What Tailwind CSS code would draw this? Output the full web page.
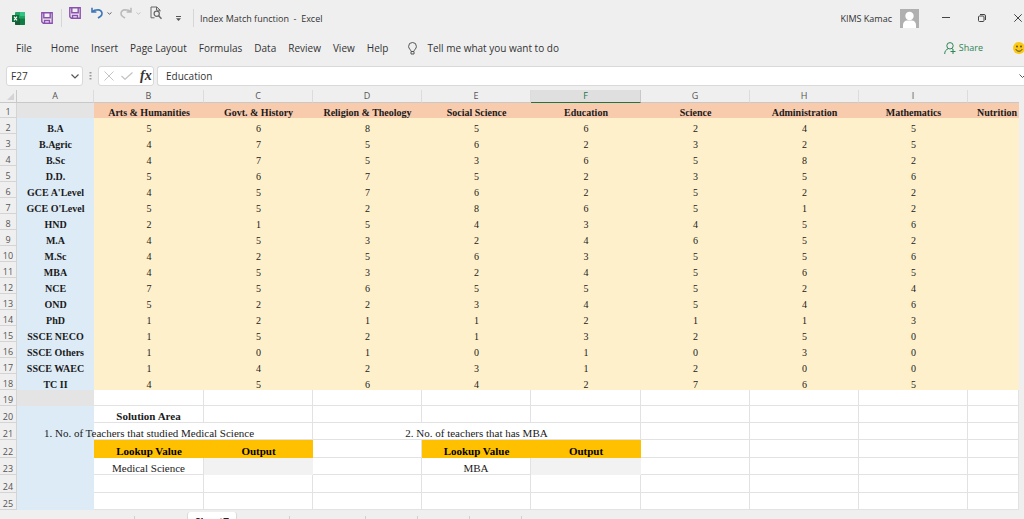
<!DOCTYPE html>
<html lang="en">
<head>
<meta charset="utf-8">
<title>Index Match function - Excel</title>
<script src="https://cdn.jsdelivr.net/npm/@tailwindcss/browser@4"></script>
</head>
<body class="h-screen overflow-hidden flex flex-col bg-[#efefef] text-[#333] text-[10px] leading-4 font-['Open_Sans',sans-serif]">

<header class="flex items-center h-9 shrink-0 pl-3">
  <svg class="w-[13px] h-[13px]" viewBox="0 0 13 13" aria-label="Excel">
    <rect x="3" y="0" width="10" height="13" rx="1" fill="#21a366"/>
    <path d="M3 6.500h5V13H4a1 1 0 0 1-1-1z" fill="#185c37"/><path d="M8 0h4a1 1 0 0 1 1 1v3H8z" fill="#33c481"/><path d="M8 6.500h5V12a1 1 0 0 1-1 1H8z" fill="#107c41"/>
    <rect x="0" y="3" width="7" height="7" rx=".6" fill="#0f6b38"/>
    <path d="M2 4.700l3 3.600M5 4.700L2 8.300" stroke="#fff" stroke-width="1.100"/>
  </svg>
  <button aria-label="Save" class="ml-4"><svg class="w-3 h-3" viewBox="0 0 12 12" fill="none" stroke="#8a4fb0" stroke-width="1.400"><path d="M.8.8h10.400v10.400H2.300L.8 9.700zM2.800.8v5h6.400v-5M3.500 11V8.500h5V11"/></svg></button>
  <span class="w-px h-[18px] bg-[#d6d6d6] ml-2"></span>
  <div class="flex items-center self-start h-[26px] ml-[7px]">
    <button aria-label="Save workbook"><svg class="w-3 h-3" viewBox="0 0 12 12" fill="none" stroke="#8a4fb0" stroke-width="1.400"><path d="M.8.8h10.400v10.400H2.300L.8 9.700zM2.800.8v5h6.400v-5M3.500 11V8.500h5V11"/></svg></button>
    <button aria-label="Undo" class="ml-[10px]"><svg class="w-3 h-3" viewBox="0 0 12 12" fill="none" stroke="#3c76b8" stroke-width="1.600"><path d="M1 .8v4.200h4.400M1.200 4.800C3 2.700 5 2.700 7 2.700c4.500.3 5 5 2.300 6.800L7 11"/></svg></button>
    <button aria-label="Undo options" class="ml-1"><svg class="w-[5px] h-[3px]" viewBox="0 0 5 3" fill="none" stroke="#666"><path d="M.5.500l2 1.700 2-1.700"/></svg></button>
    <button aria-label="Redo" class="ml-2"><svg class="w-3 h-3" viewBox="0 0 12 12" fill="none" stroke="#b9b9b9" stroke-width="1.500"><path d="M11 .8v4.200H6.600M10.800 4.800C9 2.700 7 2.700 5 2.700c-4.500.3-5 5-2.300 6.800L5 11"/></svg></button>
    <button aria-label="Redo options" class="ml-1"><svg class="w-[5px] h-[3px]" viewBox="0 0 5 3" fill="none" stroke="#c4c4c4"><path d="M.5.500l2 1.700 2-1.700"/></svg></button>
    <button aria-label="Print preview" class="ml-[9px]"><svg class="w-3 h-[14px]" viewBox="0 0 12 14" fill="none" stroke="#666"><path d="M4.500 11.800H1V1h5.800L10 4v1.500M6.500 1v3.200H10"/><circle cx="6.700" cy="7.800" r="2.600" stroke-width="1.200"/><path d="M8.600 9.700l2.900 3" stroke-width="1.400"/></svg></button>
  </div>
  <button aria-label="Customize quick access" class="ml-[14px]"><svg class="w-[5px] h-[5px]" viewBox="0 0 5 5"><path d="M0 .5h5" stroke="#555"/><path d="M0 2.200h5L2.500 5z" fill="#555"/></svg></button>
  <span class="w-px h-[18px] bg-[#d6d6d6] ml-3"></span>
  <h1 class="ml-[6px] pt-px whitespace-pre text-[9px]">Index Match function  -  Excel</h1>
  <span class="ml-auto pt-px text-[9px]">KIMS Kamac</span>
  <svg class="w-[19px] h-[19px] ml-2" viewBox="0 0 19 19"><path fill="#b0b0b0" d="M0 0h19v19H0z"/><circle cx="9.500" cy="7" r="4.200" fill="#fff"/><path d="M3 19v-3c0-3 2-4.500 4-4.500h5c2 0 4 1.500 4 4.500v3z" fill="#fff"/></svg>
  <button aria-label="Minimize" class="ml-[23px]"><svg class="w-2 h-2" viewBox="0 0 8 8" stroke="#444"><path d="M0 3.500h8"/></svg></button>
  <button aria-label="Restore" class="ml-7"><svg class="w-2 h-2" viewBox="0 0 8 8" fill="none" stroke="#444"><rect x=".5" y="2" width="5.500" height="5.500" rx="1"/><path d="M2 .5h4a1.500 1.500 0 0 1 1.500 1.500v4"/></svg></button>
  <button aria-label="Close" class="ml-7 mr-[2px]"><svg class="w-2 h-2" viewBox="0 0 8 8" stroke="#444"><path d="M.3.300l7.400 7.400M7.700.3L.3 7.700"/></svg></button>
</header>

<nav class="flex items-center h-6 shrink-0 pl-4">
  <button class="mr-[19px]">File</button>
  <div class="flex gap-3">
    <button>Home</button><button>Insert</button><button>Page Layout</button><button>Formulas</button><button>Data</button><button>Review</button><button>View</button><button>Help</button>
  </div>
  <button class="flex items-center ml-5 gap-[10px]">
    <svg class="w-[9px] h-[13px]" viewBox="0 0 9 13" fill="none" stroke="#555"><path d="M3 9.500C3 7.500.6 7 .6 4.400a3.900 3.900 0 0 1 7.800 0C8.400 7 6 7.500 6 9.500zM3 10v2h3v-2"/></svg>
    <span>Tell me what you want to do</span>
  </button>
  <button class="flex items-center gap-[3px] ml-auto text-[9px] text-[#2e8555]">
    <svg class="w-3 h-3" viewBox="0 0 12 12" fill="none" stroke="#2e8555"><circle cx="6" cy="3.800" r="3.200"/><path d="M.7 12c0-3 1.500-4.500 3.600-5.300M7.800 6.500l1 .7M9 7v5M6.500 9.500h5"/></svg>
    <span>Share</span>
  </button>
  <button aria-label="Feedback" class="ml-[30px] -mr-px"><svg class="w-3 h-3" viewBox="0 0 12 12"><circle cx="6" cy="6" r="6" fill="#fcc811"/><circle cx="4" cy="4.500" r=".9" fill="#444"/><circle cx="8" cy="4.500" r=".9" fill="#444"/><path d="M2.800 7.200c1.200 2.700 5.200 2.700 6.400 0" fill="none" stroke="#444"/></svg></button>
</nav>

<div class="flex items-center h-[30px] shrink-0 pt-[2px] pl-[6px]">
  <div class="flex items-center w-[77px] h-5 bg-white border border-[#d9d9d9] rounded-[3px] pl-1 pr-[3px]">
    <input aria-label="Name box" value="F27" class="min-w-0 flex-1 outline-none">
    <button aria-label="Open name list"><svg class="w-2 h-[5px]" viewBox="0 0 8 5" fill="none" stroke="#555" stroke-width="1.200"><path d="M.5.500L4 4 7.500.5"/></svg></button>
  </div>
  <svg class="w-[3px] h-2 ml-[6px]" viewBox="0 0 3 8" fill="#999"><path d="M.5 0h2v1.500h-2zM.5 3h2v1.500h-2zM.5 6h2v1.500h-2z"/></svg>
  <div class="flex items-center w-14 h-5 ml-[6px] bg-white border border-[#d9d9d9] rounded-[3px] pl-[5px]">
    <button aria-label="Cancel"><svg class="w-[10px] h-[10px]" viewBox="0 0 10 10" stroke="#c4c4c4"><path d="M.5.500l9 9M9.500.5l-9 9"/></svg></button>
    <button aria-label="Enter" class="ml-[7px]"><svg class="w-3 h-2" viewBox="0 0 12 8" fill="none" stroke="#c4c4c4" stroke-width="1.200"><path d="M.5 4l3.500 3.300L11.500.5"/></svg></button>
    <button aria-label="Insert function" class="ml-[7px] font-['Liberation_Serif',serif] italic font-bold text-sm leading-4">fx</button>
  </div>
  <div class="flex items-center flex-1 min-w-0 h-5 ml-[3px] bg-white border border-r-0 border-[#d9d9d9] rounded-l-[3px] pl-2">
    <input aria-label="Formula bar" value="Education" class="min-w-0 flex-1 outline-none">
    <button aria-label="Expand formula bar" class="-mr-[2px]"><svg class="w-[7px] h-[4px]" viewBox="0 0 7 4" fill="none" stroke="#555"><path d="M.5.500l3 3 3-3"/></svg></button>
  </div>
</div>

<main class="pr-[5px] shrink-0">
  <table class="w-full table-fixed border-separate border-spacing-0 text-center text-[#1a1a1a] font-['Liberation_Serif',serif]">
    <colgroup>
      <col class="w-[17px]"><col class="w-[77px]"><col class="w-[110px]"><col class="w-[109px]"><col class="w-[109px]"><col class="w-[109px]"><col class="w-[110px]"><col class="w-[109px]"><col class="w-[109px]"><col class="w-[109px]"><col>
    </colgroup>
    <thead id="letters"></thead>
    <tbody id="cells"></tbody>
  </table>
</main>

<footer class="flex flex-1 min-h-0 overflow-hidden pt-[2px] pl-[134px] text-[#222]">
  <span class="w-[53px] h-5 mt-1 border-l border-[#d0d0d0] shrink-0"></span>
  <button class="w-[50px] h-5 shrink-0 bg-white border-x border-[#d9d9d9] rounded-t-[3px] font-bold leading-[14px]">Sheet7</button>
  <span class="w-[53px] h-5 mt-1 border-r border-[#d0d0d0] shrink-0"></span>
  <span class="w-[76px] h-5 mt-1 border-r border-[#d0d0d0] shrink-0"></span>
  <span class="w-[52px] h-5 mt-1 border-r border-[#d0d0d0] shrink-0"></span>
  <span class="w-[52px] h-5 mt-1 border-r border-[#d0d0d0] shrink-0"></span>
  <span class="w-[52px] h-5 mt-1 border-r border-[#d0d0d0] shrink-0"></span>
</footer>

<script>
const fields = ['Arts & Humanities','Govt. & History','Religion & Theology','Social Science','Education','Science','Administration','Mathematics'];
const rows = [
  ['B.A','56856245'],['B.Agric','47562325'],['B.Sc','47536582'],['D.D.','56752356'],
  ["GCE A'Level",'45762522'],["GCE O'Level",'55286512'],['HND','21543456'],['M.A','45324652'],
  ['M.Sc','42563556'],['MBA','45324565'],['NCE','75655524'],['OND','52234546'],['PhD','12112113'],
  ['SSCE NECO','15213250'],['SSCE Others','10101030'],['SSCE WAEC','14231200'],['TC II','45642765']
];
const num = n => `<th scope="row" class="p-0 bg-[#efefef] border-r border-b border-[#d4d4d4] font-['Open_Sans',sans-serif] font-normal text-[9px] leading-[11px] align-bottom text-[#555]">${n}</th>`;

document.getElementById('letters').innerHTML = '<tr class="h-[13px] font-[\'Open_Sans\',sans-serif] text-[9px] leading-3 text-[#555]">' +
  '<th class="p-0 border-b border-r border-[#c8c8c8]"><svg class="w-[7px] h-[7px] ml-auto mr-[2px]" viewBox="0 0 7 7"><path d="M7 0v7H0z" fill="#d4d4d4"/></svg></th>' +
  [...'ABCDEFGHI'].map(c => c === 'F'
    ? '<th scope="col" class="p-0 font-normal bg-[#dfdfdf] text-[#217346] border-b border-[#217346] border-r border-r-[#c8c8c8]">F</th>'
    : `<th scope="col" class="p-0 font-normal border-b border-b-[#c8c8c8] border-r border-r-[#dcdcdc]">${c}</th>`).join('') +
  '<th class="p-0 border-b border-[#c8c8c8]"></th></tr>';

let html = '<tr class="h-[15px] text-[10px] leading-[10px]">' + num(1) + '<td class="p-0 bg-[#e4e4e4]"></td>' +
  fields.map(f => `<th scope="col" class="p-0 bg-[#f8cbad] align-bottom">${f.replace('&', '&amp;')}</th>`).join('') +
  '<th scope="col" class="p-0 pr-[2px] bg-[#f8cbad] align-bottom text-right">Nutrition</th></tr>';

rows.forEach(([name, values], i) => {
  html += '<tr class="h-4 text-[10px] leading-[10px]">' + num(i + 2) +
    `<th scope="row" class="p-0 bg-[#ddebf7] align-bottom">${name}</th>` +
    [...values].map(v => `<td class="p-0 bg-[#fff0cc] align-bottom">${v}</td>`).join('') +
    '<td class="p-0 bg-[#fff0cc]"></td></tr>';
});

const styles = {
  line: 'p-0 bg-white border-r border-b border-[#e2e2e2]',
  open: 'p-0 border-b border-[#e2e2e2] align-bottom',
  bold: 'p-0 bg-white border-r border-b border-[#e2e2e2] font-bold align-bottom',
  gold: 'p-0 bg-[#ffc000] text-black font-bold align-bottom',
  text: 'p-0 bg-white border-r border-b border-[#e2e2e2] align-bottom',
  gray: 'p-0 bg-[#f2f2f2]',
};
const label = t => `<div class="flex justify-center whitespace-nowrap"><span>${t}</span></div>`;
const lower = [
  [19, 'h-4 text-[11px] leading-3', {}],
  [20, 'h-[17px] text-[11px] leading-[11px]', {B: ['bold', 'Solution Area']}],
  [21, 'h-[17px] text-[11px] leading-[11px]', {
    B: ['open', label('1. No. of Teachers that studied Medical Science')], D: ['open', ''],
    E: ['open', label('2. No. of teachers that has MBA')]}],
  [22, 'h-[18px] text-[11px] leading-[14px]', {B: ['gold', 'Lookup Value'], C: ['gold', 'Output'], E: ['gold', 'Lookup Value'], F: ['gold', 'Output']}],
  [23, 'h-[17px] text-[11px] leading-[11px]', {B: ['text', 'Medical Science'], C: ['gray', ''], E: ['text', 'MBA'], F: ['gray', '']}],
  [24, 'h-[18px]', {}],
  [25, 'h-[17px]', {}],
];
for (const [n, height, filled] of lower) {
  html += `<tr class="bg-white ${height}">` + num(n) +
    (n === 19 ? '<td class="p-0 bg-[#e4e4e4]"></td>' : '<td class="p-0 bg-[#ddebf7]"></td>') +
    [...'BCDEFGHIJ'].map(c => {
      const [kind, text] = filled[c] || ['line', ''];
      return `<td class="${styles[kind]}">${text}</td>`;
    }).join('') + '</tr>';
}
document.getElementById('cells').innerHTML = html;
</script>
</body>
</html>
